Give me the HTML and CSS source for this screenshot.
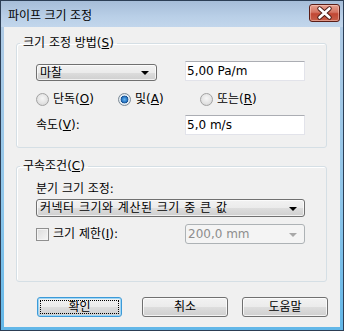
FILE: index.html
```html
<!DOCTYPE html>
<html lang="ko">
<head>
  <meta charset="UTF-8" />
  <title>파이프 크기 조정</title>
  <link rel="stylesheet" href="styles.css">
</head>
<body>
  <div class="window">
    <div class="titlebar">
      <span class="title">파이프 크기 조정</span>
      <div class="close-btn">
        <svg width="29" height="16" viewBox="0 0 29 16">
          <path d="M9.5 3.5 L19.5 12.5 M19.5 3.5 L9.5 12.5" stroke="#4a1a14" stroke-width="4.4" stroke-linecap="round" fill="none"/>
          <path d="M9.5 3.5 L19.5 12.5 M19.5 3.5 L9.5 12.5" stroke="#ffffff" stroke-width="2.6" stroke-linecap="round" fill="none"/>
        </svg>
      </div>
    </div>

    <div class="client">
      <fieldset class="group group-method">
        <legend>크기 조정 방법(<u>S</u>)</legend>
        <div class="row row-top">
          <div class="combo combo-method"><span>마찰</span><i class="arrow"></i></div>
          <div class="textbox">5,00 Pa/m</div>
        </div>
        <div class="row row-radios">
          <label class="radio-item"><span class="radio"></span>단독(<u>O</u>)</label>
          <label class="radio-item"><span class="radio checked"></span>및(<u>A</u>)</label>
          <label class="radio-item"><span class="radio"></span>또는(<u>R</u>)</label>
        </div>
        <div class="row row-speed">
          <span class="label">속도(<u>V</u>):</span>
          <div class="textbox">5,0 m/s</div>
        </div>
      </fieldset>

      <fieldset class="group group-limits">
        <legend>구속조건(<u>C</u>)</legend>
        <div class="label">분기 크기 조정:</div>
        <div class="combo combo-branch"><span>커넥터 크기와 계산된 크기 중 큰 값</span><i class="arrow"></i></div>
        <div class="row row-limit">
          <label class="check-item"><span class="checkbox"></span>크기 제한(<u>I</u>):</label>
          <div class="combo combo-disabled"><span>200,0 mm</span><i class="arrow"></i></div>
        </div>
      </fieldset>

      <div class="buttons">
        <div class="btn btn-default"><span class="focus">확인</span></div>
        <div class="btn btn-cancel">취소</div>
        <div class="btn btn-help">도움말</div>
      </div>
    </div>
  </div>
</body>
</html>
```

FILE: styles.css
```css
* {
  margin: 0;
  padding: 0;
  box-sizing: border-box;
}

body {
  font-family: "DejaVu Sans", "Noto Sans CJK KR", sans-serif;
  font-size: 12px;
  line-height: 14px;
  color: #000;
  background: #fff;
}

u {
  text-decoration: underline;
  text-underline-offset: 1px;
}

.window {
  width: 344px;
  height: 331px;
  border: 1px solid #2c3e55;
  background: linear-gradient(#b4cbe4, #8fc6ea 60%, #62b7e8);
  display: flex;
  flex-direction: column;
}

/* title bar */
.titlebar {
  height: 26px;
  display: flex;
  align-items: center;
  justify-content: space-between;
  padding: 0 3px 0 7px;
  background: linear-gradient(#a6bdd8, #b9cfe7 60%, #c2d6ec);
}

.title {
  font-family: "Noto Sans CJK KR", sans-serif;
  font-size: 12px;
  margin-top: 1px;
}

.close-btn {
  width: 31px;
  height: 18px;
  align-self: flex-start;
  margin-top: 3px;
  border: 1px solid #5a1d16;
  border-radius: 3px;
  background: linear-gradient(#e6a190, #d47462 45%, #c14733 55%, #c7604b);
  box-shadow: inset 0 0 0 1px rgba(255, 220, 210, 0.45);
}

.close-btn svg {
  display: block;
}

/* client area */
.client {
  height: 300px;
  margin: 0 3px;
  background: #f0f0f0;
}

.group {
  margin: 0 13px 0 12px;
  border: 1px solid #d5dfe5;
  border-radius: 3px;
  box-shadow: inset 1px 1px 0 #fff;
  padding: 0 21px 0 19px;
  min-width: 0;
}

.group legend {
  margin-left: -16px;
  padding: 0 3px;
  line-height: 14px;
}

.group-method {
  margin-top: 9px;
  padding-top: 11px;
  padding-bottom: 12px;
}

.group-limits {
  margin-top: 11px;
  padding-top: 9px;
  padding-bottom: 37px;
}

.row {
  display: flex;
  justify-content: space-between;
  align-items: center;
}

.row-top {
  height: 20px;
  align-items: flex-end;
}

.row-radios {
  height: 16px;
  margin-top: 10px;
  justify-content: flex-start;
}

.row-speed {
  height: 20px;
  margin-top: 8px;
}

.row-limit {
  height: 20px;
  margin-top: 7px;
}

.label {
  line-height: 14px;
}

.textbox {
  width: 120px;
  height: 20px;
  background: #fff;
  border: 1px solid #e2e3ea;
  border-top-color: #abadb3;
  padding-left: 1px;
  line-height: 18px;
}

/* combo boxes */
.combo {
  display: flex;
  align-items: center;
  justify-content: space-between;
  border: 1px solid #707070;
  border-radius: 3px;
  background: linear-gradient(#f2f2f2, #ebebeb 50%, #dddddd 51%, #cfcfcf);
  box-shadow: inset 0 0 0 1px rgba(255, 255, 255, 0.7);
  padding: 0 7px 0 3px;
}

.combo-method {
  width: 121px;
  height: 17px;
}

.combo-branch {
  width: 269px;
  height: 18px;
  margin-top: 3px;
}

.combo-branch span {
  letter-spacing: 0.5px;
}

.combo-disabled {
  width: 120px;
  height: 20px;
  border-color: #adb2b5;
  background: #f4f4f4;
  box-shadow: none;
  color: #8d8d8d;
  padding-left: 2px;
}

.arrow {
  width: 0;
  height: 0;
  border-left: 4px solid transparent;
  border-right: 4px solid transparent;
  border-top: 4px solid #000;
  margin-top: 1px;
}

.combo-disabled .arrow {
  border-top-color: #a8a8a8;
}

/* radios and checkbox */
.radio-item,
.check-item {
  display: flex;
  align-items: center;
}

.radio-item {
  width: 82px;
}

.radio {
  width: 13px;
  height: 13px;
  border-radius: 50%;
  border: 1px solid #a2a2a2;
  background: radial-gradient(circle at 50% 40%, #f6f6f6 0, #e4e4e4 55%, #cfcfcf 100%);
  margin-right: 4px;
}

.radio.checked {
  border-color: #7d8a96;
  background: radial-gradient(circle at 50% 50%, #69b5ef 0, #2d7cc8 2.5px, #174f8e 3.6px, #e6eef5 4.2px, #d2dbe3 100%);
}

.checkbox {
  width: 13px;
  height: 13px;
  border: 1px solid #8f8f8f;
  background: linear-gradient(135deg, #dcdcdc, #f6f6f6);
  box-shadow: inset 0 0 0 1px #f4f4f4;
  margin-right: 4px;
}

/* buttons */
.buttons {
  display: flex;
  margin-top: 15px;
  padding-left: 33px;
}

.btn {
  width: 86px;
  height: 20px;
  display: flex;
  align-items: center;
  justify-content: center;
  border: 1px solid #707070;
  border-radius: 3px;
  background: linear-gradient(#f2f2f2, #ebebeb 50%, #dddddd 51%, #cfcfcf);
  box-shadow: inset 0 0 0 1px rgba(255, 255, 255, 0.75);
}

.btn-default {
  width: 85px;
  border-color: #3c9ad8;
  box-shadow: inset 0 0 0 1px #9fd6f5;
  padding: 2px;
}

.btn-default .focus {
  width: 100%;
  height: 100%;
  border: 1px dotted #000;
  display: flex;
  align-items: center;
  justify-content: center;
}

.btn-cancel {
  margin-left: 20px;
}

.btn-help {
  margin-left: 14px;
}
```
